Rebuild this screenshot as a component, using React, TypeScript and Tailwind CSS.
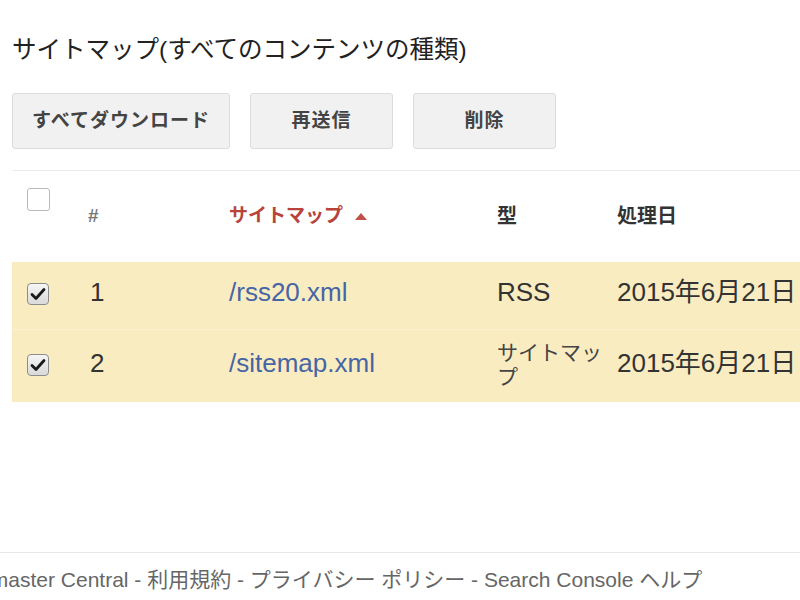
import React from "react";

const FONT = { fontFamily: '"Liberation Sans", Arial, "Noto Sans CJK JP", sans-serif' };

function Checked() {
  return (
    <div className="w-[22px] h-[22px] rounded-[4px] border border-[#8c8c8c] bg-gradient-to-b from-[#f6f6f6] to-[#d9d9d9] flex items-center justify-center shadow-[inset_0_0_1px_#fff]">
      <svg width="16" height="14" viewBox="0 0 16 14">
        <path d="M2 7.5 L6 11.5 L14 2.5" stroke="#1a1a1a" strokeWidth="2.8" fill="none" strokeLinecap="round" strokeLinejoin="round" />
      </svg>
    </div>
  );
}

function Btn({ label, w }: { label: string; w: string }) {
  return (
    <div className={`${w} h-[56px] rounded-[3px] border border-[#dcdcdc] bg-[#f1f1f1] flex items-center justify-center text-[19px] font-bold text-[#444] tracking-[1px]`}>
      {label}
    </div>
  );
}

export default function App() {
  return (
    <div className="w-[800px] h-[600px] overflow-hidden bg-white flex flex-col relative" style={FONT}>
      <div className="pl-3 pt-[34px] text-[24.5px] leading-[32px] text-[#222]">サイトマップ(すべてのコンテンツの種類)</div>
      <div className="pl-3 mt-[27px] flex gap-5">
        <Btn label="すべてダウンロード" w="w-[218px]" />
        <Btn label="再送信" w="w-[143px]" />
        <Btn label="削除" w="w-[143px]" />
      </div>
      <div className="ml-3 mt-[21px] border-t border-[#ebebeb]" />
      <div className="ml-3 w-[850px]">
        <div className="grid grid-cols-[76px_141px_268px_120px_245px] h-[91px] items-start">
          <div className="pl-[15px] pt-[17px]">
            <div className="w-[23px] h-[23px] rounded-[3px] border border-[#b9b9b9] bg-white" />
          </div>
          <div className="pt-[33px] text-[19px] leading-[24px] font-bold text-[#777]">#</div>
          <div className="pt-[33px] text-[19px] leading-[24px] font-bold text-[#b8433b] flex items-center gap-3">
            サイトマップ
            <svg width="12" height="8" viewBox="0 0 12 8"><path d="M0 8 L6 1 L12 8 Z" fill="#c0504a" /></svg>
          </div>
          <div className="pt-[33px] text-[20px] leading-[24px] font-bold text-[#333]">型</div>
          <div className="pt-[33px] text-[20px] leading-[24px] font-bold text-[#333]">処理日</div>
        </div>
        <div className="bg-[#f9ecc1]">
          <div className="grid grid-cols-[76px_141px_268px_120px_245px] h-[68px] items-center text-[26px] text-[#333] border-b border-[#fbf1d0] pb-[6px]">
            <div className="pl-[15px] pt-[3px]"><Checked /></div>
            <div className="pl-[2px]">1</div>
            <div className="text-[#4565a5]">/rss20.xml</div>
            <div>RSS</div>
            <div>2015年6月21日</div>
          </div>
          <div className="grid grid-cols-[76px_141px_268px_120px_245px] h-[72px] items-center text-[26px] text-[#333] pb-[6px]">
            <div className="pl-[15px] pt-[3px]"><Checked /></div>
            <div className="pl-[2px]">2</div>
            <div className="text-[#4565a5]">/sitemap.xml</div>
            <div className="pr-[8px] text-[21px] leading-[24px] text-[#444] pt-[4px]">サイトマップ</div>
            <div>2015年6月21日</div>
          </div>
        </div>
      </div>
      <div className="mt-auto mb-[47px] border-t border-[#e6e6e6]" />
      <div className="absolute top-[566px] left-[-52px] whitespace-nowrap text-[21px] leading-[28px] text-[#666]">
        Webmaster Central - 利用規約 - プライバシー ポリシー - Search Console ヘルプ
      </div>
    </div>
  );
}
